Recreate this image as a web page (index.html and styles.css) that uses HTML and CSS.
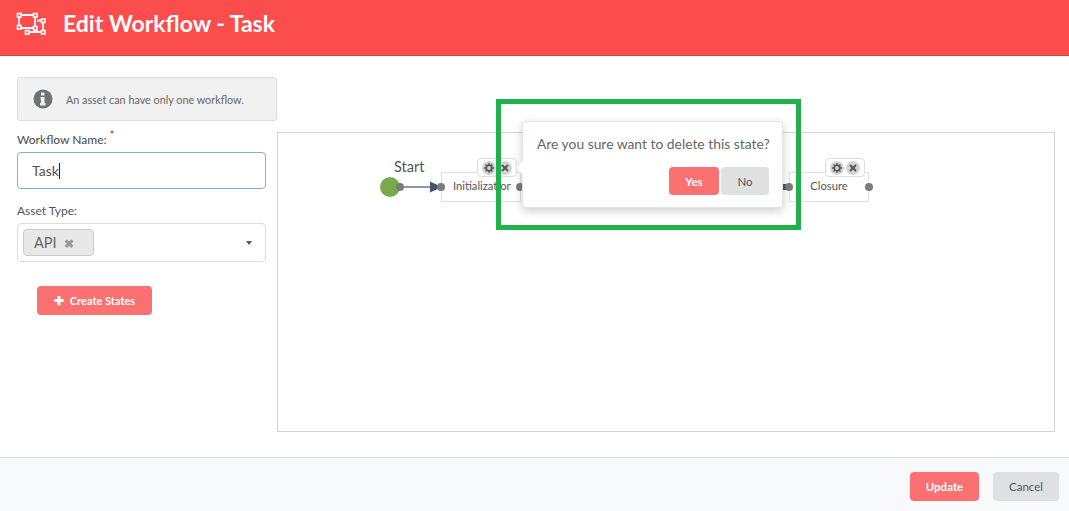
FILE: index.html
```html
<!DOCTYPE html>
<html lang="en">
<head>
<meta charset="utf-8">
<title>Edit Workflow - Task</title>
<link rel="stylesheet" href="styles.css">
</head>
<body>
<div class="app">
  <header class="header">
    <svg class="logo" width="32" height="26" viewBox="0 0 32 26" fill="none" stroke="#fff" stroke-width="1.800">
      <path d="M3 4H19V17H3Z M21 9.500H27V21H13"/>
      <g fill="#fb4e4c" stroke-width="1.600">
        <rect x="1.500" y="2.500" width="3.500" height="3.500"/><rect x="17.500" y="2.500" width="3.500" height="3.500"/>
        <rect x="1.500" y="14.500" width="3.500" height="3.500"/><rect x="9.500" y="19.500" width="3.500" height="3.500"/>
        <rect x="17.500" y="15.500" width="3.500" height="3.500"/><rect x="25.500" y="8" width="3.500" height="3.500"/>
        <rect x="25.500" y="19.500" width="3.500" height="3.500"/>
      </g>
    </svg>
    <h1 class="title">Edit Workflow - Task</h1>
  </header>
  <main class="main">
    <aside class="side">
      <div class="alert">
        <svg class="info" width="20" height="20" viewBox="0 0 20 20"><circle cx="10" cy="10" r="9.500" fill="#6f7273"/><path d="M8 3.500h3.500v3H8z M7.500 8h4v6h1v2.500h-5.500V14h1v-3.500h-.5z" fill="#f1f1f1"/></svg>
        <span>An asset can have only one workflow.</span>
      </div>
      <div class="form">
        <label class="label label-name">Workflow Name: <sup class="req">*</sup></label>
        <div class="input"><span>Task</span><i class="caret"></i></div>
        <label class="label label-type">Asset Type:</label>
        <div class="select">
          <span class="chip">API <b class="chip-x">✖</b></span>
          <i class="arrow"></i>
        </div>
        <button class="btn btn-red btn-create"><span class="plus">✚</span>Create States</button>
      </div>
    </aside>
    <section class="canvas">
      <div class="start-label">Start</div>
      <div class="start"></div>
      <div class="node node-init"><span class="node-text">Initialization</span></div>
      <div class="node node-close">Closure</div>
      <svg class="edge" width="48" height="12" viewBox="0 0 48 12"><path d="M0 6H36" stroke="#8b98a8" stroke-width="2"/><path d="M30 .5l12 5.500-12 5.500z" fill="#43566f"/></svg>
      <i class="stub"></i>
      <i class="dot dot-a"></i><i class="dot dot-b"></i>
      <i class="dot dot-c"></i>
      <div class="tools tools-init">
        <i class="tool"><svg width="10" height="10" viewBox="0 0 10 10"><circle cx="5" cy="5" r="2.800" fill="none" stroke="#555" stroke-width="1.800"/><path d="M5 0v2M5 8v2M0 5h2M8 5h2M1.500 1.500l1.300 1.300M7.200 7.200l1.300 1.300M1.500 8.500l1.300-1.300M7.200 2.800l1.300-1.300" stroke="#555" stroke-width="1.300"/></svg></i>
        <i class="tool"><svg width="8" height="8" viewBox="0 0 8 8"><path d="M1 1l6 6M7 1l-6 6" stroke="#555" stroke-width="2"/></svg></i>
      </div>
      <i class="dot dot-d"></i><i class="dot dot-e"></i>
      <div class="tools tools-close">
        <i class="tool"><svg width="10" height="10" viewBox="0 0 10 10"><circle cx="5" cy="5" r="2.800" fill="none" stroke="#555" stroke-width="1.800"/><path d="M5 0v2M5 8v2M0 5h2M8 5h2M1.500 1.500l1.300 1.300M7.200 7.200l1.300 1.300M1.500 8.500l1.300-1.300M7.200 2.800l1.300-1.300" stroke="#555" stroke-width="1.300"/></svg></i>
        <i class="tool"><svg width="8" height="8" viewBox="0 0 8 8"><path d="M1 1l6 6M7 1l-6 6" stroke="#555" stroke-width="2"/></svg></i>
      </div>
    </section>
  </main>
  <footer class="footer">
    <button class="btn btn-red btn-foot">Update</button>
    <button class="btn btn-grey btn-foot">Cancel</button>
  </footer>
  <div class="popover">
    <p class="question">Are you sure want to delete this state?</p>
    <div class="actions">
      <button class="btn btn-red btn-pop">Yes</button>
      <button class="btn btn-grey btn-pop">No</button>
    </div>
  </div>
  <div class="highlight"></div>
</div>
</body>
</html>
```
FILE: styles.css
```css
* { box-sizing: border-box; }
html, body { margin: 0; height: 100%; }
body { font-family: Lato, "Open Sans", sans-serif; color: #555; background: #fff; overflow: hidden; }
.app { position: relative; width: 1069px; height: 511px; display: flex; flex-direction: column; }

.header { height: 56px; flex: none; background: #fb4e4c; border-bottom: 1px solid #d9403f; display: flex; align-items: center; padding: 0 0 7px 16px; }
.logo { flex: none; }
.title { margin: -2px 0 0 15px; font-size: 23px; font-weight: 700; color: #fff; line-height: 30px; }

.main { flex: 1; display: flex; padding: 21px 14px 0 17px; min-height: 0; }
.side { width: 260px; flex: none; }
.alert { height: 44px; background: #f1f1f1; border: 1px solid #ddd; border-radius: 3px; display: flex; align-items: center; padding-left: 15px; font-size: 10.800px; color: #666; }
.info { margin-right: 13px; flex: none; }
.form { width: 249px; }
.label { display: block; font-size: 12px; line-height: 15px; color: #555; }
.label-name { margin-top: 11px; font-weight: 500; }
.label-type { margin-top: 14px; }
.req { color: #e02020; font-size: 11px; line-height: 0; }
.input { margin-top: 5px; height: 37px; border: 1px solid #7fb2d9; border-radius: 4px; padding-left: 14px; display: flex; align-items: center; font-size: 14px; color: #555; }
.caret { width: 1px; height: 16px; background: #222; }
.select { margin-top: 5px; height: 39px; border: 1px solid #ddd; border-radius: 4px; padding: 5px; display: flex; justify-content: space-between; align-items: flex-start; }
.chip { width: 71px; height: 27px; background: #e8e8e8; border: 1px solid #ccc; border-radius: 4px; font-size: 14.500px; line-height: 26px; color: #666; padding-left: 10px; }
.chip-x { font-size: 12px; color: #999; margin-left: 4px; }
.arrow { margin: 12px 8px 0 0; border: 3.500px solid transparent; border-top: 4px solid #555; border-bottom: 0; }

.btn { border: 0; border-radius: 4px; font-family: inherit; font-size: 11.500px; padding: 0; }
.btn-red { background: #fb7070; color: #fff; font-weight: 700; }
.btn-grey { background: #dfe0e2; color: #555; }
.btn-create { display: block; margin: 24px 0 0 20px; width: 115px; height: 29px; font-size: 11px; }
.plus { font-size: 12px; margin-right: 6px; }

.canvas { position: relative; flex: none; width: 778px; height: 300px; margin-top: 55px; border: 1px solid #d4d4d4; }
.start-label { position: absolute; left: 116px; top: 25px; font-size: 14.500px; line-height: 18px; color: #555; }
.start { position: absolute; left: 102px; top: 44px; width: 20px; height: 20px; border-radius: 50%; background: #78a94a; }
.edge { position: absolute; left: 122px; top: 48px; }
.stub { position: absolute; left: 504px; top: 51px; width: 8px; height: 6px; background: #43566f; }
.dot { position: absolute; width: 8px; height: 8px; border-radius: 50%; background: #7b7b7b; }
.dot-a { left: 118px; top: 50px; }
.dot-b { left: 159px; top: 50px; }
.dot-c { left: 238px; top: 50px; }
.dot-d { left: 507px; top: 50px; }
.dot-e { left: 587px; top: 50px; }
.node { position: absolute; top: 39px; height: 30px; border: 1px solid #e0e0e0; background: #fff; font-size: 11.200px; line-height: 26px; color: #555; text-align: center; }
.node-init { left: 163px; width: 80px; overflow: hidden; }
.node-text { display: block; width: 58px; margin-left: 11px; overflow: hidden; white-space: nowrap; text-align: left; }
.node-close { left: 511px; width: 80px; }
.tools { position: absolute; top: 25px; height: 19px; width: 40px; background: #fff; border: 1px solid #ddd; border-radius: 4px; display: flex; align-items: center; justify-content: center; gap: 2px; }
.tools-init { left: 199px; }
.tools-close { left: 547px; }
.tool { width: 14px; height: 14px; border-radius: 50%; background: #d4d4d4; display: flex; align-items: center; justify-content: center; }

.footer { position: relative; flex: none; height: 54px; background: #f8f9fb; border-top: 1px solid #ddd; display: flex; justify-content: flex-end; align-items: flex-start; gap: 14px; padding: 14px 10px 0 0; }
.btn-foot { width: 69px; height: 29px; }
.btn-foot.btn-grey { width: 66px; }

.popover { position: absolute; left: 522px; top: 121px; width: 261px; height: 87px; background: #fff; border: 1px solid #e4e4e4; border-radius: 4px; box-shadow: 0 3px 10px rgba(0,0,0,.2); padding: 13px 13px 0 14px; }
.popover::before { content: ""; position: absolute; left: -6px; top: 40px; width: 10px; height: 10px; background: #fff; border-left: 1px solid #e4e4e4; border-bottom: 1px solid #e4e4e4; transform: rotate(45deg); }
.question { margin: 0; font-size: 13.850px; line-height: 18px; color: #666; white-space: nowrap; }
.actions { display: flex; justify-content: flex-end; gap: 2px; margin-top: 14px; }
.btn-pop { height: 28px; width: 50px; }
.btn-pop.btn-grey { width: 48px; }

.highlight { position: absolute; left: 496px; top: 99px; width: 305px; height: 131px; border: 5px solid #21b04b; pointer-events: none; }
```
